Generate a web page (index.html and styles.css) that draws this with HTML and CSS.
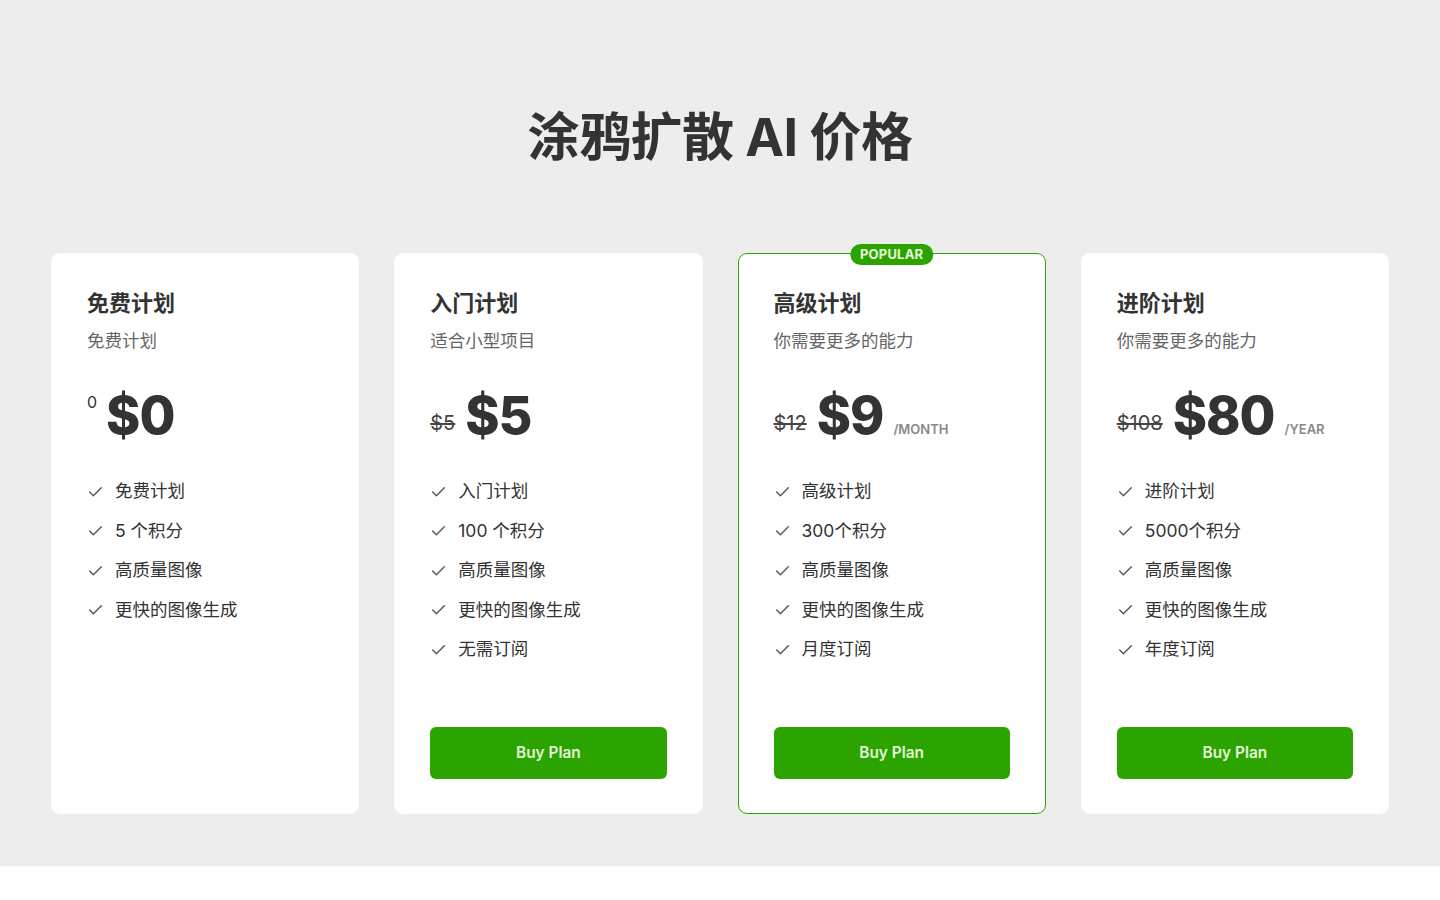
FILE: index.html
```html
<!DOCTYPE html>
<html lang="zh-CN">
<head>
<meta charset="utf-8">
<title>涂鸦扩散 AI 价格</title>
<link rel="stylesheet" href="styles.css">
</head>
<body>
<section class="pricing">
  <h1 class="heading">涂鸦扩散 AI 价格</h1>
  <div class="cards">
    <div class="card">
      <h2 class="plan-name">免费计划</h2>
      <p class="plan-desc">免费计划</p>
      <div class="price-row">
        <span class="price-small">0</span><span class="price">$0</span>
      </div>
      <ul class="features">
        <li><svg class="check" viewBox="0 0 16 16"><path d="M2.5 8.5 L6 12 L13.5 4.5"/></svg>免费计划</li>
        <li><svg class="check" viewBox="0 0 16 16"><path d="M2.5 8.5 L6 12 L13.5 4.5"/></svg>5 个积分</li>
        <li><svg class="check" viewBox="0 0 16 16"><path d="M2.5 8.5 L6 12 L13.5 4.5"/></svg>高质量图像</li>
        <li><svg class="check" viewBox="0 0 16 16"><path d="M2.5 8.5 L6 12 L13.5 4.5"/></svg>更快的图像生成</li>
      </ul>
    </div>
    <div class="card">
      <h2 class="plan-name">入门计划</h2>
      <p class="plan-desc">适合小型项目</p>
      <div class="price-row">
        <span class="price-old">$5</span><span class="price">$5</span>
      </div>
      <ul class="features">
        <li><svg class="check" viewBox="0 0 16 16"><path d="M2.5 8.5 L6 12 L13.5 4.5"/></svg>入门计划</li>
        <li><svg class="check" viewBox="0 0 16 16"><path d="M2.5 8.5 L6 12 L13.5 4.5"/></svg>100 个积分</li>
        <li><svg class="check" viewBox="0 0 16 16"><path d="M2.5 8.5 L6 12 L13.5 4.5"/></svg>高质量图像</li>
        <li><svg class="check" viewBox="0 0 16 16"><path d="M2.5 8.5 L6 12 L13.5 4.5"/></svg>更快的图像生成</li>
        <li><svg class="check" viewBox="0 0 16 16"><path d="M2.5 8.5 L6 12 L13.5 4.5"/></svg>无需订阅</li>
      </ul>
      <button class="buy">Buy Plan</button>
    </div>
    <div class="card card-popular">
      <span class="badge">POPULAR</span>
      <h2 class="plan-name">高级计划</h2>
      <p class="plan-desc">你需要更多的能力</p>
      <div class="price-row">
        <span class="price-old">$12</span><span class="price">$9</span><span class="price-unit">/MONTH</span>
      </div>
      <ul class="features">
        <li><svg class="check" viewBox="0 0 16 16"><path d="M2.5 8.5 L6 12 L13.5 4.5"/></svg>高级计划</li>
        <li><svg class="check" viewBox="0 0 16 16"><path d="M2.5 8.5 L6 12 L13.5 4.5"/></svg>300个积分</li>
        <li><svg class="check" viewBox="0 0 16 16"><path d="M2.5 8.5 L6 12 L13.5 4.5"/></svg>高质量图像</li>
        <li><svg class="check" viewBox="0 0 16 16"><path d="M2.5 8.5 L6 12 L13.5 4.5"/></svg>更快的图像生成</li>
        <li><svg class="check" viewBox="0 0 16 16"><path d="M2.5 8.5 L6 12 L13.5 4.5"/></svg>月度订阅</li>
      </ul>
      <button class="buy">Buy Plan</button>
    </div>
    <div class="card">
      <h2 class="plan-name">进阶计划</h2>
      <p class="plan-desc">你需要更多的能力</p>
      <div class="price-row">
        <span class="price-old">$108</span><span class="price">$80</span><span class="price-unit">/YEAR</span>
      </div>
      <ul class="features">
        <li><svg class="check" viewBox="0 0 16 16"><path d="M2.5 8.5 L6 12 L13.5 4.5"/></svg>进阶计划</li>
        <li><svg class="check" viewBox="0 0 16 16"><path d="M2.5 8.5 L6 12 L13.5 4.5"/></svg>5000个积分</li>
        <li><svg class="check" viewBox="0 0 16 16"><path d="M2.5 8.5 L6 12 L13.5 4.5"/></svg>高质量图像</li>
        <li><svg class="check" viewBox="0 0 16 16"><path d="M2.5 8.5 L6 12 L13.5 4.5"/></svg>更快的图像生成</li>
        <li><svg class="check" viewBox="0 0 16 16"><path d="M2.5 8.5 L6 12 L13.5 4.5"/></svg>年度订阅</li>
      </ul>
      <button class="buy">Buy Plan</button>
    </div>
  </div>
</section>
</body>
</html>
```

FILE: styles.css
```css
* {
  box-sizing: border-box;
}

html, body {
  margin: 0;
  padding: 0;
}

body {
  background: #ffffff;
  font-family: Inter, "Noto Sans CJK SC", sans-serif;
  color: #333333;
}

.pricing {
  background: #ededed;
  padding: 107px 51px 52px;
}

.heading {
  margin: 0 0 84px;
  text-align: center;
  font-size: 52px;
  line-height: 62px;
  font-weight: 700;
  color: #333333;
  letter-spacing: -0.5px;
}

.cards {
  display: grid;
  grid-template-columns: repeat(4, 1fr);
  gap: 35px;
}

.card {
  position: relative;
  background: #ffffff;
  border: 1px solid #ffffff;
  border-radius: 9px;
  padding: 34px 35px 34px;
  display: flex;
  flex-direction: column;
}

.card-popular {
  border-color: #2ca400;
}

.badge {
  position: absolute;
  top: -10px;
  left: 50%;
  transform: translateX(-50%);
  background: #2ca400;
  color: #e8f8de;
  font-size: 13px;
  font-weight: 700;
  line-height: 21px;
  padding: 0 10px;
  border-radius: 11px;
  letter-spacing: 0.2px;
}

.plan-name {
  margin: 0;
  font-size: 22px;
  line-height: 31px;
  font-weight: 700;
  color: #333333;
}

.plan-desc {
  margin: 9px 0 0;
  font-size: 17.5px;
  line-height: 26px;
  color: #666666;
}

.price-row {
  margin-top: 35px;
  height: 54px;
  line-height: 54px;
  white-space: nowrap;
}

.price-small {
  display: inline-block;
  font-size: 16px;
  line-height: 16px;
  vertical-align: top;
  margin-top: 5px;
  margin-right: 9px;
  color: #333333;
}

.price-old {
  font-size: 20px;
  text-decoration: line-through;
  text-decoration-thickness: 2px;
  color: #444444;
  vertical-align: 4px;
  margin-right: 10px;
}

.price {
  font-size: 52px;
  font-weight: 800;
  color: #333333;
  letter-spacing: -1px;
}

.price-unit {
  font-size: 13px;
  font-weight: 600;
  color: #888888;
  margin-left: 10px;
}

.features {
  list-style: none;
  margin: 35px 0 64px;
  padding: 0;
  display: flex;
  flex-direction: column;
  gap: 13.2px;
}

.features li {
  display: flex;
  align-items: center;
  gap: 11px;
  font-size: 17.5px;
  line-height: 26.4px;
  color: #333333;
}

.check {
  width: 17px;
  height: 17px;
  flex: none;
  fill: none;
  stroke: #555555;
  stroke-width: 1.3;
  stroke-linecap: round;
  stroke-linejoin: round;
}

.buy {
  margin-top: auto;
  height: 52px;
  width: 100%;
  border: none;
  border-radius: 6px;
  background: #2ca400;
  color: #e3f6d8;
  font-family: Inter, "Noto Sans CJK SC", sans-serif;
  font-size: 15.4px;
  font-weight: 600;
  cursor: pointer;
}
```
